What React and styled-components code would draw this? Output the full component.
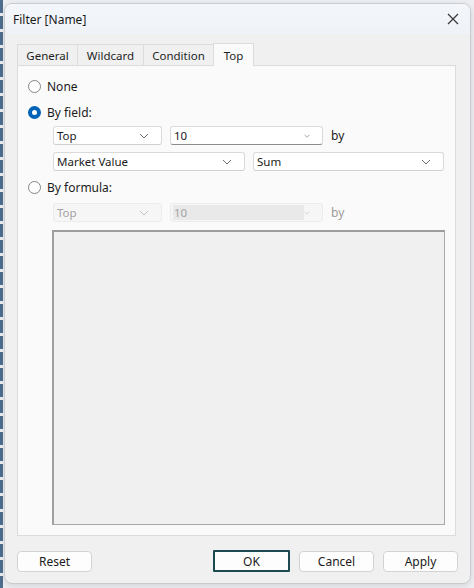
import styled, { createGlobalStyle } from "styled-components";

const GlobalStyle = createGlobalStyle`
  html, body {
    margin: 0;
    padding: 0;
    background: #eef0f3;
  }
  body {
    font-family: "Noto Sans", "Open Sans", sans-serif;
    font-size: 12px;
    color: #1b1b1b;
  }
`;

const tabs = [
  { label: "General", width: 61 },
  { label: "Wildcard", width: 67 },
  { label: "Condition", width: 71 },
  { label: "Top", width: 41, active: true },
];

export default function App() {
  return (
    <>
      <GlobalStyle />
      <StyledDesktop>
        <StyledDashStrip />
        <StyledWindow>
          <StyledTitleBar>
            <StyledTitle>Filter [Name]</StyledTitle>
            <StyledClose aria-label="close">
              <svg width="12" height="12" viewBox="0 0 12 12">
                <path d="M1 1 L11 11 M11 1 L1 11" stroke="#3a3a3a" strokeWidth="1.3" fill="none" />
              </svg>
            </StyledClose>
          </StyledTitleBar>

          <StyledBody>
            <StyledTabStrip>
              {tabs.map((tab) => (
                <StyledTab key={tab.label} $width={tab.width} $active={tab.active}>
                  {tab.label}
                </StyledTab>
              ))}
            </StyledTabStrip>

            <StyledPanel>
              <StyledRadioRow>
                <StyledRadio />
                None
              </StyledRadioRow>

              <StyledRadioRow $gap={12}>
                <StyledRadio $checked />
                By field:
              </StyledRadioRow>

              <StyledFieldRow $gap={7}>
                <Combo width={109} value="Top" />
                <Combo width={153} value="10" editable />
                <StyledBy>by</StyledBy>
              </StyledFieldRow>

              <StyledFieldRow $gap={7}>
                <Combo width={192} value="Market Value" />
                <Combo width={191} value="Sum" />
              </StyledFieldRow>

              <StyledRadioRow $gap={9}>
                <StyledRadio />
                By formula:
              </StyledRadioRow>

              <StyledFieldRow $gap={9}>
                <Combo width={109} value="Top" disabled />
                <Combo width={153} value="10" editable disabled />
                <StyledBy $disabled>by</StyledBy>
              </StyledFieldRow>

              <StyledFormulaBox />
            </StyledPanel>

            <StyledButtonBar>
              <StyledButton>Reset</StyledButton>
              <StyledSpacer />
              <StyledButton $default>OK</StyledButton>
              <StyledButton>Cancel</StyledButton>
              <StyledButton>Apply</StyledButton>
            </StyledButtonBar>
          </StyledBody>
        </StyledWindow>
      </StyledDesktop>
    </>
  );
}

function Combo({ width, value, editable, disabled }) {
  return (
    <StyledCombo style={{ width }} $editable={editable} $disabled={disabled}>
      <StyledComboText $editable={editable} $disabled={disabled}>
        {value}
      </StyledComboText>
      <svg width="10" height="6" viewBox="0 0 10 6">
        <path
          d="M1 1 L5 5 L9 1"
          stroke={disabled ? "#c4c4c4" : "#6e6e6e"}
          strokeWidth="1"
          fill="none"
        />
      </svg>
    </StyledCombo>
  );
}

const StyledDesktop = styled.div`
  display: flex;
  align-items: flex-start;
  height: 588px;
  overflow: hidden;
`;

const StyledDashStrip = styled.div`
  width: 3px;
  height: 588px;
  margin-right: 1px;
  background: repeating-linear-gradient(
    to bottom,
    #4f6f8f 0px,
    #4f6f8f 13px,
    #eef0f3 13px,
    #eef0f3 16px
  );
`;

const StyledWindow = styled.div`
  width: 465px;
  height: 579px;
  margin-top: 3px;
  border: 1px solid #c9cbce;
  border-radius: 8px;
  background: #f0f0f0;
  box-shadow: 0 2px 8px rgba(0, 0, 0, 0.12);
  display: flex;
  flex-direction: column;
  overflow: hidden;
`;

const StyledTitleBar = styled.div`
  flex: 0 0 30px;
  display: flex;
  align-items: center;
  justify-content: space-between;
  padding: 0 9px 0 8px;
  background: linear-gradient(to bottom, #f3f6fa, #eff2f6);
`;

const StyledTitle = styled.span`
  font-size: 12px;
  color: #1a1a1a;
`;

const StyledClose = styled.div`
  width: 16px;
  height: 16px;
  display: flex;
  align-items: center;
  justify-content: center;
`;

const StyledBody = styled.div`
  flex: 1;
  display: flex;
  flex-direction: column;
  padding: 9px 12px 0 12px;
`;

const StyledTabStrip = styled.div`
  flex: 0 0 22px;
  display: flex;
  align-items: flex-end;
`;

const StyledTab = styled.div`
  box-sizing: border-box;
  width: ${(p) => p.$width}px;
  height: ${(p) => (p.$active ? "23px" : "21px")};
  display: flex;
  align-items: center;
  justify-content: center;
  margin-bottom: ${(p) => (p.$active ? "-1px" : "0")};
  background: ${(p) => (p.$active ? "#fafafa" : "#f0f0f0")};
  border: 1px solid #dcdcdc;
  border-bottom: none;
  margin-right: -1px;
  font-size: 11.5px;
  color: #1f1f1f;
  position: relative;
  z-index: ${(p) => (p.$active ? 1 : 0)};
`;

const StyledPanel = styled.div`
  flex: 0 0 auto;
  width: 417px;
  height: 446px;
  background: #fafafa;
  border: 1px solid #dcdcdc;
  padding: 13px 10px 10px 10px;
  display: flex;
  flex-direction: column;
`;

const StyledRadioRow = styled.div`
  height: 14px;
  margin-top: ${(p) => p.$gap || 0}px;
  display: flex;
  align-items: center;
  gap: 6px;
  font-size: 12px;
  color: #1b1b1b;
`;

const StyledRadio = styled.span`
  box-sizing: border-box;
  width: 13px;
  height: 13px;
  border-radius: 50%;
  border: ${(p) => (p.$checked ? "4px solid #0063b8" : "1px solid #858585")};
  background: #ffffff;
`;

const StyledFieldRow = styled.div`
  margin-top: ${(p) => p.$gap || 0}px;
  margin-left: 25px;
  display: flex;
  align-items: center;
  gap: 8px;
`;

const StyledCombo = styled.div`
  box-sizing: border-box;
  height: 19px;
  display: flex;
  align-items: center;
  justify-content: space-between;
  padding: 0 12px 0 2px;
  background: ${(p) => (p.$disabled ? "#f6f6f6" : "#ffffff")};
  border: 1px solid ${(p) => (p.$disabled ? "#ececec" : "#dadada")};
  border-bottom-color: ${(p) =>
    p.$editable && !p.$disabled ? "#8c8c8c" : p.$disabled ? "#ececec" : "#d0d0d0"};
  border-radius: 3px;
`;

const StyledComboText = styled.span`
  flex: ${(p) => (p.$editable ? "0 0 130px" : "1")};
  height: 15px;
  line-height: 15px;
  padding-left: 1px;
  font-size: 11.5px;
  color: ${(p) => (p.$disabled ? "#a2a2a2" : "#1b1b1b")};
  background: ${(p) => (p.$editable && p.$disabled ? "#e9e9e9" : "transparent")};
`;

const StyledBy = styled.span`
  font-size: 12px;
  color: ${(p) => (p.$disabled ? "#9d9d9d" : "#1b1b1b")};
`;

const StyledFormulaBox = styled.div`
  margin-top: 8px;
  margin-left: 24px;
  width: 393px;
  height: 298px;
  box-sizing: border-box;
  background: #f0f0f0;
  border: 1px solid #a8a8a8;
  border-top: 2px solid #9c9c9c;
  border-left: 2px solid #a0a0a0;
`;

const StyledButtonBar = styled.div`
  margin-top: 14px;
  display: flex;
  align-items: center;
  gap: 9px;
`;

const StyledSpacer = styled.div`
  flex: 1;
`;

const StyledButton = styled.button`
  box-sizing: border-box;
  width: ${(p) => (p.$default ? "77px" : "75px")};
  height: ${(p) => (p.$default ? "22px" : "21px")};
  font-family: "Noto Sans", "Open Sans", sans-serif;
  font-size: 12px;
  color: #1b1b1b;
  background: #fdfdfd;
  border: ${(p) => (p.$default ? "2px solid #1d4a50" : "1px solid #d3d3d3")};
  border-radius: ${(p) => (p.$default ? "1px" : "4px")};
  padding: 0;
`;
